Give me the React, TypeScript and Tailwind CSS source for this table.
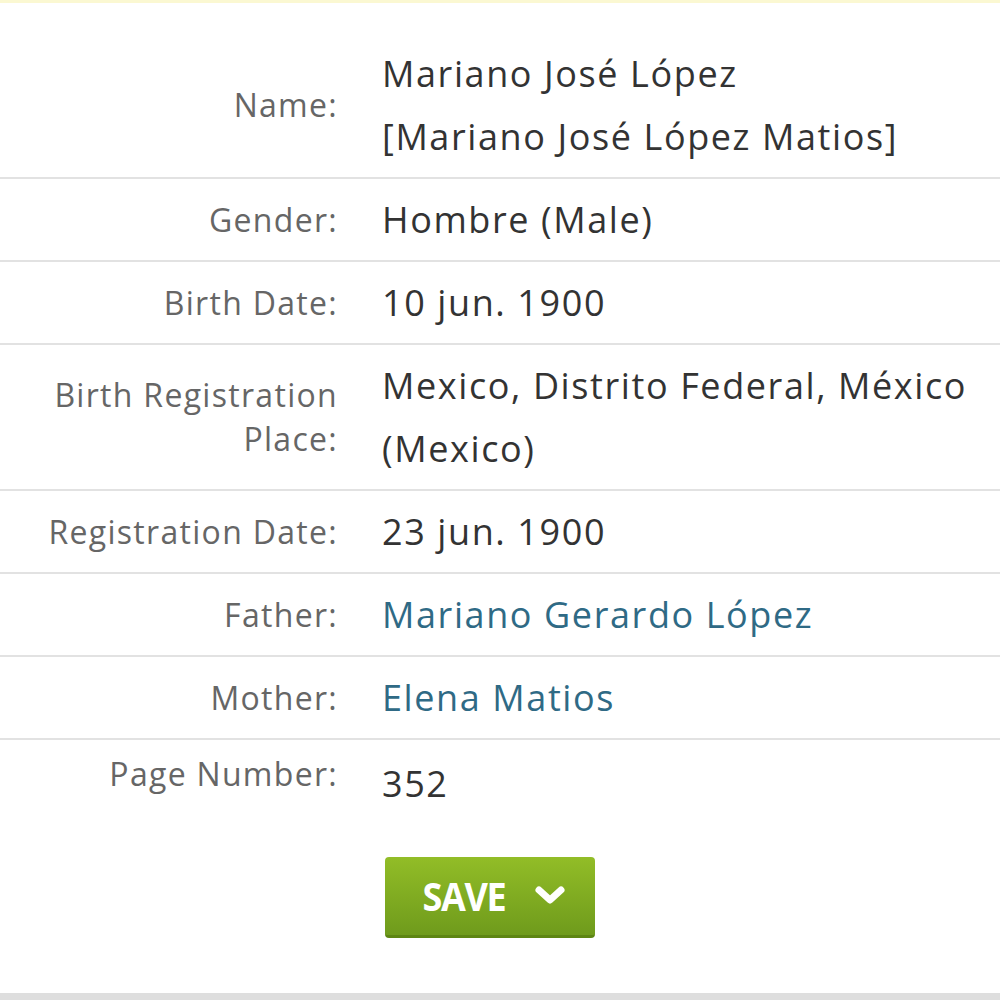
import React from "react";

type Row = {
  label: string[];
  value: string[];
  link?: boolean;
  last?: boolean;
};

const rows: Row[] = [
  { label: ["Name:"], value: ["Mariano José López", "[Mariano José López Matios]"] },
  { label: ["Gender:"], value: ["Hombre (Male)"] },
  { label: ["Birth Date:"], value: ["10 jun. 1900"] },
  { label: ["Birth Registration", "Place:"], value: ["Mexico, Distrito Federal, México", "(Mexico)"] },
  { label: ["Registration Date:"], value: ["23 jun. 1900"] },
  { label: ["Father:"], value: ["Mariano Gerardo López"], link: true },
  { label: ["Mother:"], value: ["Elena Matios"], link: true },
  { label: ["Page Number:"], value: ["352"], last: true },
];

export default function App() {
  return (
    <div
      className="w-[1000px] h-[1000px] bg-white flex flex-col overflow-hidden"
      style={{ fontFamily: "'Open Sans', 'Noto Sans', sans-serif" }}
    >
      <div className="h-[3px] bg-[#fbf8d2]" />
      <div className="h-[30px]" />
      {rows.map((r, i) => (
        <div
          key={i}
          className={
            r.last
              ? "flex items-start pt-[12px]"
              : "flex items-center py-[9px] border-b-2 border-[#e2e2e2]"
          }
        >
          <div className="w-[338px] shrink-0 text-right text-[32px] leading-[44px] tracking-[1.3px] text-[#666666]">
            {r.label.map((l, j) => (
              <div key={j}>{l}</div>
            ))}
          </div>
          <div
            className={
              "pl-[44px] text-[36px] leading-[63px] tracking-[1.6px] " +
              (r.link ? "text-[#2f6a85]" : "text-[#333333]")
            }
          >
            {r.value.map((v, j) => (
              <div key={j}>{v}</div>
            ))}
          </div>
        </div>
      ))}
      <div className="pl-[385px] pt-[42px]">
        <button className="w-[210px] h-[81px] rounded-[4px] bg-gradient-to-b from-[#92bd27] to-[#6f9b1c] border-b-[3px] border-[#5e8613] flex items-center justify-center gap-[24px] text-white pl-[4px]">
          <span
            className="text-[40px] font-bold tracking-[-1.5px] scale-x-[0.9] leading-none"
            style={{ fontFamily: "'Liberation Sans Narrow', 'Open Sans', sans-serif" }}
          >
            SAVE
          </span>
          <svg width="32" height="24" viewBox="0 0 32 24" fill="none">
            <path d="M5 6 L16 16 L27 6" stroke="white" strokeWidth="7" strokeLinejoin="round" strokeLinecap="round" />
          </svg>
        </button>
      </div>
      <div className="flex-1" />
      <div className="h-[7px] bg-[#dedede]" />
    </div>
  );
}
